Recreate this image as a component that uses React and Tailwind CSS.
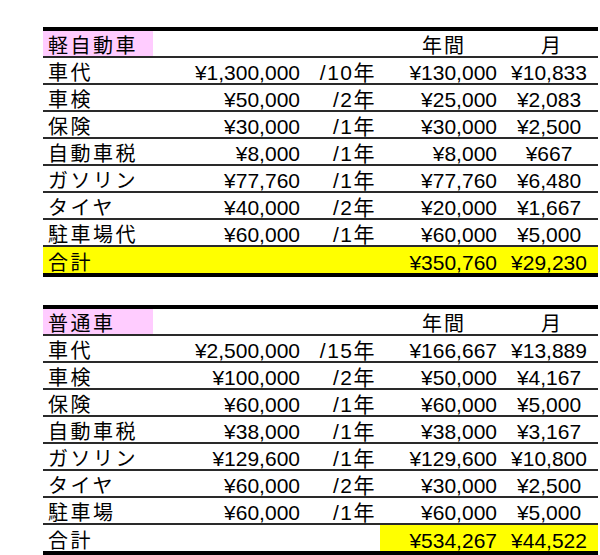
import React from 'react';

const tables = [
  {
    title: '軽自動車',
    rows: [
      ['車代', '¥1,300,000', '/10年', '¥130,000', '¥10,833'],
      ['車検', '¥50,000', '/2年', '¥25,000', '¥2,083'],
      ['保険', '¥30,000', '/1年', '¥30,000', '¥2,500'],
      ['自動車税', '¥8,000', '/1年', '¥8,000', '¥667'],
      ['ガソリン', '¥77,760', '/1年', '¥77,760', '¥6,480'],
      ['タイヤ', '¥40,000', '/2年', '¥20,000', '¥1,667'],
      ['駐車場代', '¥60,000', '/1年', '¥60,000', '¥5,000'],
    ],
    total: ['¥350,760', '¥29,230'],
    fullYellow: true,
  },
  {
    title: '普通車',
    rows: [
      ['車代', '¥2,500,000', '/15年', '¥166,667', '¥13,889'],
      ['車検', '¥100,000', '/2年', '¥50,000', '¥4,167'],
      ['保険', '¥60,000', '/1年', '¥60,000', '¥5,000'],
      ['自動車税', '¥38,000', '/1年', '¥38,000', '¥3,167'],
      ['ガソリン', '¥129,600', '/1年', '¥129,600', '¥10,800'],
      ['タイヤ', '¥60,000', '/2年', '¥30,000', '¥2,500'],
      ['駐車場', '¥60,000', '/1年', '¥60,000', '¥5,000'],
    ],
    total: ['¥534,267', '¥44,522'],
    fullYellow: false,
  },
];

const grid = 'grid grid-cols-[110px_152px_75px_120px_98px]';
const cell = 'flex items-end leading-none';
const label = `${cell} pl-[5px] text-[20px] tracking-[2.5px]`;
const num = `${cell} text-[21px]`;

const CostTable = ({ title, rows, total, fullYellow }) => (
  <div className="w-[555px] border-t-4 border-b-4 border-black">
    <div className={`${grid} h-[27px] border-b-2 border-[#2a2a2a]`}>
      <div className={`${label} bg-[#ffccff]`}>{title}</div>
      <div />
      <div />
      <div className={`${cell} text-[20px] justify-center pl-[8px] tracking-[2px]`}>年間</div>
      <div className={`${cell} text-[20px] justify-center pl-[4px]`}>月</div>
    </div>
    {rows.map((r) => (
      <div key={r[0]} className={`${grid} h-[27px] border-b-2 border-[#2a2a2a]`}>
        <div className={label}>{r[0]}</div>
        <div className={`${num} justify-end pr-[5px]`}>{r[1]}</div>
        <div className={`${num} justify-end pr-[4px] tracking-[1.5px]`}>{r[2]}</div>
        <div className={`${num} justify-end pr-[3px]`}>{r[3]}</div>
        <div className={`${num} justify-center`}>{r[4]}</div>
      </div>
    ))}
    <div className={`${grid} h-[26px] ${fullYellow ? 'bg-[#ffff00]' : ''}`}>
      <div className={label}>合計</div>
      <div />
      <div />
      <div className={`${num} justify-end pr-[3px] bg-[#ffff00]`}>{total[0]}</div>
      <div className={`${num} justify-center bg-[#ffff00]`}>{total[1]}</div>
    </div>
  </div>
);

export default function App() {
  return (
    <div className="w-[600px] h-[555px] bg-white overflow-hidden pt-[27px] pl-[43px] text-black font-['Liberation_Sans','Noto_Sans_CJK_JP',sans-serif]">
      <div className="flex flex-col gap-[28px]">
        {tables.map((t) => (
          <CostTable key={t.title} {...t} />
        ))}
      </div>
    </div>
  );
}
